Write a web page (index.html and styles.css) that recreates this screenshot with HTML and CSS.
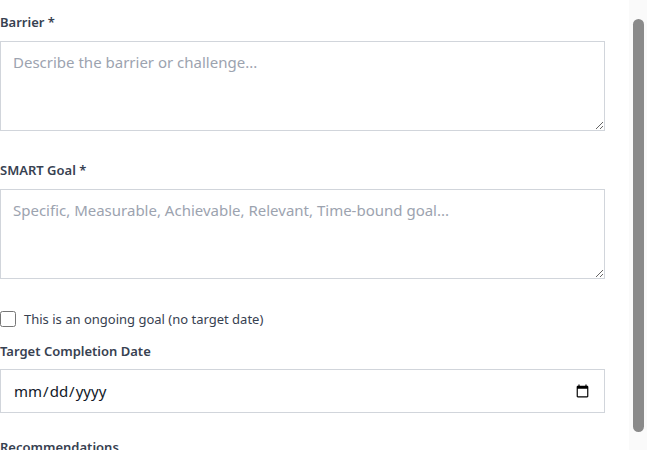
FILE: index.html
```html
<!DOCTYPE html>
<html lang="en">
<head>
<meta charset="utf-8">
<title>Goal form</title>
<link rel="stylesheet" href="styles.css">
</head>
<body>
<div class="viewport">
  <form class="form">
    <div class="field">
      <label class="label" for="barrier">Barrier *</label>
      <textarea id="barrier" class="textarea" placeholder="Describe the barrier or challenge..."></textarea>
    </div>
    <div class="field">
      <label class="label" for="goal">SMART Goal *</label>
      <textarea id="goal" class="textarea" placeholder="Specific, Measurable, Achievable, Relevant, Time-bound goal..."></textarea>
    </div>
    <label class="check-row">
      <input type="checkbox" class="checkbox">
      <span>This is an ongoing goal (no target date)</span>
    </label>
    <div class="field field-date">
      <label class="label" for="date">Target Completion Date</label>
      <input id="date" type="date" class="date-input">
    </div>
    <div class="field">
      <label class="label" for="rec">Recommendations</label>
      <textarea id="rec" class="textarea"></textarea>
    </div>
  </form>
  <div class="scrollbar"><div class="thumb"></div></div>
</div>
</body>
</html>
```
FILE: styles.css
```css
html, body {
  margin: 0;
  padding: 0;
  background: #ffffff;
}
body {
  font-family: "Segoe UI", "Noto Sans", "Open Sans", sans-serif;
  color: #111827;
}
.viewport {
  display: flex;
  width: 647px;
  height: 450px;
  overflow: hidden;
}
.form {
  width: 605px;
  padding-top: 12px;
  margin-right: 24px;
  flex: none;
}
.field {
  display: flex;
  flex-direction: column;
  margin-bottom: 29px;
}
.label {
  font-size: 13px;
  line-height: 20px;
  font-weight: 600;
  color: #374151;
  margin-bottom: 9px;
}
.textarea {
  box-sizing: border-box;
  width: 605px;
  height: 90px;
  margin: 0;
  padding: 9px 12px;
  border: 1px solid #d1d5db;
  border-radius: 0;
  font-family: inherit;
  font-size: 15px;
  line-height: 22px;
  color: #111827;
  resize: vertical;
  outline: none;
}
.textarea::placeholder {
  color: #9ca3af;
}
.check-row {
  display: flex;
  align-items: center;
  gap: 8px;
  height: 20px;
  font-size: 13px;
  color: #374151;
  margin-top: 30px;
  margin-bottom: 12px;
}
.checkbox {
  width: 16px;
  height: 16px;
  margin: 0;
}
.field-date {
  margin-bottom: 24px;
}
.field-date .label {
  margin-bottom: 8px;
}
.date-input {
  box-sizing: border-box;
  width: 605px;
  height: 44px;
  margin: 0;
  padding: 0 12px;
  border: 1px solid #d1d5db;
  border-radius: 0;
  font-family: inherit;
  font-size: 15px;
  color: #111827;
  outline: none;
}
.scrollbar {
  width: 18px;
  flex: none;
  background: #fafafa;
  display: flex;
  justify-content: center;
  padding-top: 19px;
  box-sizing: border-box;
}
.thumb {
  width: 11px;
  height: 413px;
  border-radius: 6px;
  background: #8a8a8a;
}
```
